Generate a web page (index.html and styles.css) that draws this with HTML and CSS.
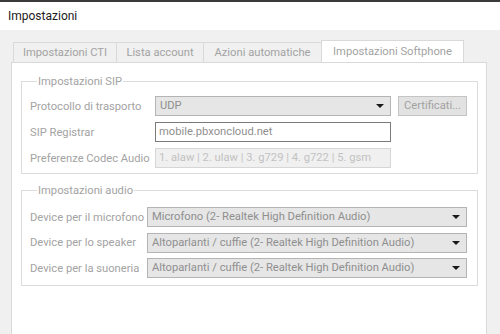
FILE: index.html
```html
<!DOCTYPE html>
<html lang="it">
<head>
    <meta charset="UTF-8">
    <meta name="viewport" content="width=device-width, initial-scale=1.0">
    <title>Impostazioni</title>
    <link rel="stylesheet" href="styles.css">
</head>
<body>

<div class="strip"></div>
<div class="titlebar">Impostazioni</div>

<div class="dialog">
    <div class="tabs">
        <div class="tab t1">Impostazioni CTI</div>
        <div class="tab t2">Lista account</div>
        <div class="tab t3">Azioni automatiche</div>
        <div class="tab t4 active">Impostazioni Softphone</div>
    </div>

    <div class="panel">
        <fieldset class="group sip">
            <legend>Impostazioni SIP</legend>
            <div class="row">
                <span class="label">Protocollo di trasporto</span>
                <div class="select">UDP<span class="arrow"></span></div>
                <div class="button">Certificati...</div>
            </div>
            <div class="row">
                <span class="label">SIP Registrar</span>
                <div class="input">mobile.pbxoncloud.net</div>
            </div>
            <div class="row">
                <span class="label">Preferenze Codec Audio</span>
                <div class="input disabled">1. alaw | 2. ulaw | 3. g729 | 4. g722 | 5. gsm</div>
            </div>
        </fieldset>

        <fieldset class="group audio">
            <legend>Impostazioni audio</legend>
            <div class="row">
                <span class="label">Device per il microfono</span>
                <div class="select wide">Microfono (2- Realtek High Definition Audio)<span class="arrow"></span></div>
            </div>
            <div class="row">
                <span class="label">Device per lo speaker</span>
                <div class="select wide">Altoparlanti / cuffie (2- Realtek High Definition Audio)<span class="arrow"></span></div>
            </div>
            <div class="row">
                <span class="label">Device per la suoneria</span>
                <div class="select wide">Altoparlanti / cuffie (2- Realtek High Definition Audio)<span class="arrow"></span></div>
            </div>
        </fieldset>
    </div>
</div>

</body>
</html>
```

FILE: styles.css
```css
* {
    margin: 0;
    padding: 0;
    box-sizing: border-box;
}

body {
    font-family: Roboto, "Liberation Sans", sans-serif;
    font-size: 11.2px;
    color: #9b9b9b;
    background-color: #f0f0f0;
    height: 100vh;
    display: flex;
    flex-direction: column;
    overflow: hidden;
}

.strip {
    height: 2px;
    background-color: #3a3a3a;
}

.titlebar {
    height: 28px;
    line-height: 28px;
    padding-left: 8px;
    background-color: #ffffff;
    color: #1b1b1b;
    font-size: 12px;
}

.dialog {
    flex: 1;
    display: flex;
    flex-direction: column;
    padding: 10px 13px 0 11px;
}

/* tab strip */
.tabs {
    display: flex;
    align-items: flex-end;
    height: 22px;
    padding-left: 2px;
}

.tab {
    height: 20px;
    line-height: 19px;
    text-align: center;
    white-space: nowrap;
    border: 1px solid #d9d9d9;
    border-right: none;
    border-bottom: none;
    background-color: #f0f0f0;
    color: #a3a3a3;
}

.t1 { width: 103px; }
.t2 { width: 87px; }
.t3 { width: 118px; }
.t4 { width: 143px; }

.tab.active {
    height: 23px;
    line-height: 21px;
    margin-bottom: -1px;
    border-right: 1px solid #d9d9d9;
    background-color: #ffffff;
}

.panel {
    flex: 1;
    background-color: #ffffff;
    border: 1px solid #d9d9d9;
    border-bottom: none;
    padding: 12px 9px 0 9px;
}

/* group boxes */
.group {
    border: 1px solid #dcdcdc;
    padding: 8px 10px 5px 8px;
    margin-bottom: 10px;
}

.group legend {
    padding: 0 1px;
    margin-left: 7px;
    color: #a3a3a3;
}

.row {
    display: flex;
    align-items: center;
    height: 20px;
    margin-bottom: 6px;
}

.row:last-child {
    margin-bottom: 0;
}

.audio {
    padding-top: 10px;
    padding-bottom: 7px;
}

.audio .row {
    margin-bottom: 5.5px;
}

.audio .row:last-child {
    margin-bottom: 0;
}

.label {
    color: #a3a3a3;
    white-space: nowrap;
}

.sip .label {
    width: 125px;
}

.audio .label {
    width: 117px;
}

.select {
    position: relative;
    width: 236px;
    height: 20px;
    line-height: 18px;
    padding-left: 4px;
    border: 1px solid #b4b4b4;
    background-color: #e6e6e6;
    color: #8f8f8f;
    white-space: nowrap;
}

.select.wide {
    width: 320px;
}

.arrow {
    position: absolute;
    right: 6px;
    top: 7px;
    border-left: 4px solid transparent;
    border-right: 4px solid transparent;
    border-top: 4px solid #1a1a1a;
}

.button {
    width: 69px;
    height: 20px;
    line-height: 18px;
    margin-left: 7px;
    text-align: center;
    border: 1px solid #c4c4c4;
    background-color: #e2e2e2;
    color: #a3a3a3;
}

.input {
    width: 236px;
    height: 20px;
    line-height: 18px;
    padding-left: 3px;
    border: 1px solid #7a7a7a;
    background-color: #ffffff;
    color: #8f8f8f;
    white-space: nowrap;
}

.input.disabled {
    border-color: #d6d6d6;
    background-color: #f0f0f0;
    color: #c2c2c2;
}
```
